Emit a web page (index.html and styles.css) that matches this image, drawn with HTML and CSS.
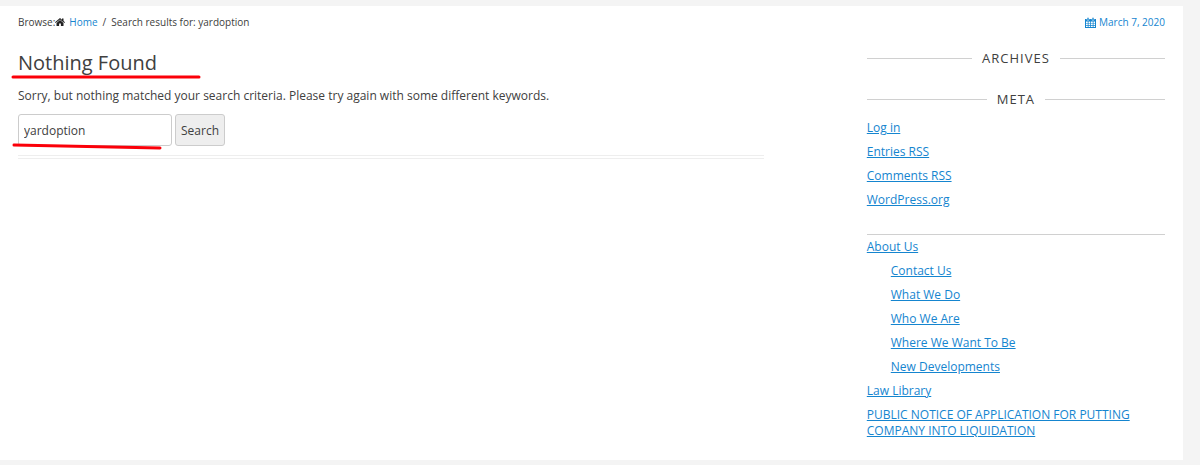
FILE: index.html
```
<!DOCTYPE html>
<html lang="en">
<head>
    <meta charset="UTF-8">
    <meta name="viewport" content="width=device-width, initial-scale=1.0">
    <title>Search results for: yardoption</title>
    <link rel="stylesheet" href="styles.css">
</head>
<body>
    <div class="container">
        <!-- Breadcrumbs and date -->
        <header class="top-bar">
            <nav class="breadcrumbs" aria-label="Breadcrumbs">
                <span class="browse">Browse:</span>
                <svg class="icon-home" viewBox="0 0 20 16" aria-hidden="true">
                    <path d="M10 0 L14 3.4 V1 H17 V6 L20 8.6 L18.7 10 L10 2.8 L1.3 10 L0 8.6 Z"/>
                    <path d="M10 4 L17 9.8 V16 H11.8 V11 H8.2 V16 H3 V9.8 Z"/>
                </svg>
                <a href="#">Home</a>
                <span class="sep">/</span>
                <span>Search results for: yardoption</span>
            </nav>
            <a class="date" href="#">
                <svg class="icon-calendar" viewBox="0 0 22 22" aria-hidden="true">
                    <path fill-rule="evenodd" d="M0 4 H22 V22 H0 Z M2 9 H5.5 V12 H2 Z M7 9 H10.5 V12 H7 Z M12 9 H15.5 V12 H12 Z M17 9 H20 V12 H17 Z M2 13.2 H5.5 V16.2 H2 Z M7 13.2 H10.5 V16.2 H7 Z M12 13.2 H15.5 V16.2 H12 Z M17 13.2 H20 V16.2 H17 Z M2 17.4 H5.5 V20.2 H2 Z M7 17.4 H10.5 V20.2 H7 Z M12 17.4 H15.5 V20.2 H12 Z M17 17.4 H20 V20.2 H17 Z"/>
                    <rect class="ring" x="4" y="1" width="4" height="6" rx="2"/>
                    <rect class="ring" x="14" y="1" width="4" height="6" rx="2"/>
                </svg>
                March 7, 2020
            </a>
        </header>

        <div class="columns">
            <main class="content">
                <h1>
                    Nothing Found
                    <svg class="mark mark-title" viewBox="0 0 190 6" aria-hidden="true">
                        <path d="M2 3 H188"/>
                    </svg>
                </h1>
                <p>Sorry, but nothing matched your search criteria. Please try again with some different keywords.</p>
                <form class="search-form">
                    <input type="text" name="s" value="yardoption" aria-label="Search for">
                    <button type="submit">Search</button>
                    <svg class="mark mark-search" viewBox="0 0 150 8" aria-hidden="true">
                        <path d="M2 3 C50 4 100 5 148 6"/>
                    </svg>
                </form>
            </main>

            <!-- Sidebar widgets -->
            <aside class="sidebar">
                <h2>Archives</h2>
                <h2>Meta</h2>
                <ul class="meta">
                    <li><a href="#">Log in</a></li>
                    <li><a href="#">Entries RSS</a></li>
                    <li><a href="#">Comments RSS</a></li>
                    <li><a href="#">WordPress.org</a></li>
                </ul>
                <ul class="pages">
                    <li>
                        <a href="#">About Us</a>
                        <ul>
                            <li><a href="#">Contact Us</a></li>
                            <li><a href="#">What We Do</a></li>
                            <li><a href="#">Who We Are</a></li>
                            <li><a href="#">Where We Want To Be</a></li>
                            <li><a href="#">New Developments</a></li>
                        </ul>
                    </li>
                    <li><a href="#">Law Library</a></li>
                    <li><a href="#">PUBLIC NOTICE OF APPLICATION FOR PUTTING COMPANY INTO LIQUIDATION</a></li>
                </ul>
            </aside>
        </div>
    </div>
</body>
</html>
```
FILE: styles.css
```
body {
    background-color: #f4f4f4;
    color: #404040;
    font-family: "Open Sans", sans-serif;
    font-size: 12px;
    line-height: 16px;
    margin: 0;
    padding: 6px 17px 5px 0;
}

a {
    color: #1585cf;
}

ul {
    list-style: none;
    margin: 0;
    padding: 0;
}

.container {
    background-color: #fff;
    padding: 8px 18px 13px;
}

/* Breadcrumbs and date */
.top-bar {
    display: flex;
    justify-content: space-between;
    font-size: 10px;
}

.top-bar a {
    text-decoration: none;
}

.breadcrumbs {
    display: flex;
    align-items: center;
}

.icon-home {
    width: 10px;
    height: 8px;
    fill: #222;
    margin-right: 4px;
}

.sep {
    margin: 0 5px;
}

.date {
    display: flex;
    align-items: center;
    gap: 3px;
}

.icon-calendar {
    width: 11px;
    height: 11px;
    fill: #1585cf;
}

.ring {
    stroke: #fff;
    stroke-width: 1;
}

/* Two column layout */
.columns {
    display: flex;
    justify-content: space-between;
    align-items: flex-start;
}

.content {
    width: 65%;
    padding-top: 20px;
    border-bottom: 4px double #eee;
}

.sidebar {
    width: 26%;
    padding-top: 20px;
}

h1 {
    position: relative;
    font-size: 20px;
    font-weight: 400;
    line-height: 26px;
    margin: 0 0 12px;
}

.content p {
    font-size: 12px;
    margin: 0 0 10px;
}

/* Search form */
.search-form {
    position: relative;
    display: flex;
    gap: 3px;
    margin-bottom: 9px;
}

.search-form input,
.search-form button {
    box-sizing: border-box;
    height: 32px;
    border: 1px solid #ccc;
    border-radius: 3px;
    color: #404040;
    font-family: inherit;
    font-size: 12px;
}

.search-form input {
    width: 154px;
    padding: 0 5px;
    background-color: #fff;
}

.search-form button {
    padding: 0 5px;
    background-color: #eee;
    cursor: pointer;
}

/* Red pen marks over the title and the search box */
.mark {
    position: absolute;
    fill: none;
    stroke: #fb0009;
    stroke-width: 3;
    stroke-linecap: round;
}

.mark-title {
    left: -7px;
    bottom: -4px;
    width: 190px;
    height: 6px;
}

.mark-search {
    left: -6px;
    bottom: -4px;
    width: 150px;
    height: 8px;
}

/* Widget titles with a line on both sides */
h2 {
    display: flex;
    align-items: center;
    gap: 10px;
    font-size: 13px;
    font-weight: 400;
    letter-spacing: 1px;
    text-transform: uppercase;
    margin: 0 0 25px;
}

h2::before,
h2::after {
    content: "";
    flex: 1;
    border-top: 1px solid #d0d0d0;
}

.meta {
    margin-top: -12px;
    padding-bottom: 18px;
    border-bottom: 1px solid #d0d0d0;
}

.sidebar li {
    margin-bottom: 8px;
}

.pages {
    padding-top: 4px;
}

.pages ul {
    margin-top: 8px;
    padding-left: 24px;
}
```
